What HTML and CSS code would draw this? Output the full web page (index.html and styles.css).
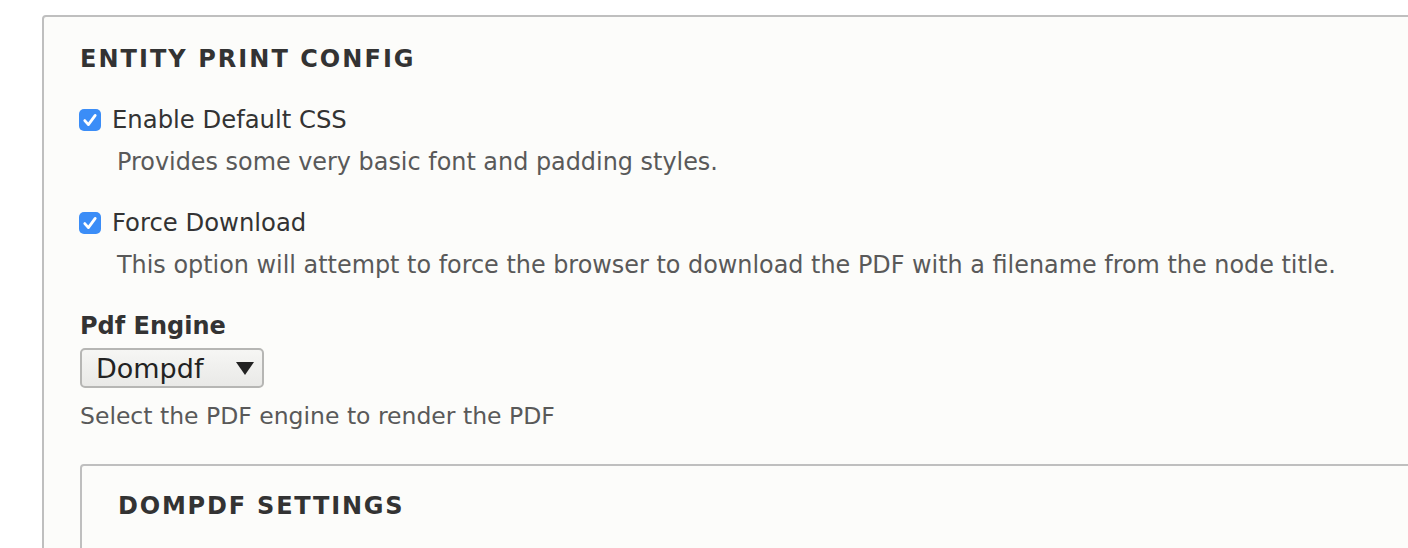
FILE: index.html
```html
<!DOCTYPE html>
<html>
<head>
<meta charset="utf-8">
<link rel="stylesheet" href="styles.css">
</head>
<body>
<div class="fieldset outer">
  <div class="legend">Entity Print Config</div>
  <div class="item">
    <label class="check-label"><span class="check"><svg viewBox="0 0 22 22" width="22" height="22"><path d="M5.8 11.6 L9.4 15.6 L16.2 6.4" fill="none" stroke="#fff" stroke-width="2.8" stroke-linecap="round" stroke-linejoin="round"/></svg></span>Enable Default CSS</label>
    <div class="description indented">Provides some very basic font and padding styles.</div>
  </div>
  <div class="item">
    <label class="check-label"><span class="check"><svg viewBox="0 0 22 22" width="22" height="22"><path d="M5.8 11.6 L9.4 15.6 L16.2 6.4" fill="none" stroke="#fff" stroke-width="2.8" stroke-linecap="round" stroke-linejoin="round"/></svg></span>Force Download</label>
    <div class="description indented">This option will attempt to force the browser to download the PDF with a filename from the node title.</div>
  </div>
  <div class="item">
    <div class="field-label">Pdf Engine</div>
    <div class="select"><span class="select-text">Dompdf</span><span class="arrow"></span></div>
    <div class="description select-desc">Select the PDF engine to render the PDF</div>
  </div>
  <div class="fieldset inner">
    <div class="legend inner-legend">Dompdf Settings</div>
  </div>
</div>
</body>
</html>
```
FILE: styles.css
```css
html, body {
  margin: 0;
  padding: 0;
  background: #fff;
  overflow: hidden;
  width: 1408px;
  height: 548px;
}
body {
  font-family: "DejaVu Sans", "Liberation Sans", sans-serif;
  color: #333;
  font-size: 24px;
}
.fieldset {
  background: #fcfcfa;
  border: 2px solid #bfbfbf;
  border-radius: 4px;
  box-sizing: border-box;
}
.outer {
  margin: 15px 0 0 42px;
  width: 1420px;
  height: 600px;
  padding: 24px 36px 0 36px;
}
.legend {
  font-weight: bold;
  text-transform: uppercase;
  letter-spacing: 0.085em;
  font-size: 24px;
  line-height: 36px;
  color: #333;
}
.inner-legend {
  letter-spacing: 0.075em;
}
.item {
  margin-top: 25px;
}
.item:first-of-type {
  margin-top: 24px;
}
.check-label {
  display: flex;
  align-items: center;
  line-height: 36px;
  font-size: 24.3px;
}
.check {
  display: inline-block;
  width: 22px;
  height: 22px;
  border-radius: 5px;
  background: #3b8df7;
  margin-left: -1px;
  margin-right: 11px;
  flex: none;
}
.check svg { display: block; }
.description {
  color: #595959;
  font-size: 23.9px;
  line-height: 36px;
}
.indented {
  margin-left: 37px;
  margin-top: 6px;
}
.field-label {
  font-weight: bold;
  line-height: 36px;
}
.select {
  display: flex;
  align-items: center;
  justify-content: space-between;
  box-sizing: border-box;
  width: 184px;
  height: 40px;
  margin-top: 4px;
  border: 2px solid #b6b6b4;
  border-radius: 5px;
  background: linear-gradient(#f6f6f4, #e9e9e7);
  padding: 0 8px 0 14px;
}
.select-text {
  font-size: 27px;
  color: #222;
}
.arrow {
  width: 0;
  height: 0;
  border-left: 9px solid transparent;
  border-right: 9px solid transparent;
  border-top: 13px solid #222;
}
.select-desc {
  margin-top: 10px;
  font-size: 23.5px;
}
.inner {
  margin-top: 30px;
  width: 1400px;
  height: 200px;
  padding: 22px 36px 0 36px;
}
```
